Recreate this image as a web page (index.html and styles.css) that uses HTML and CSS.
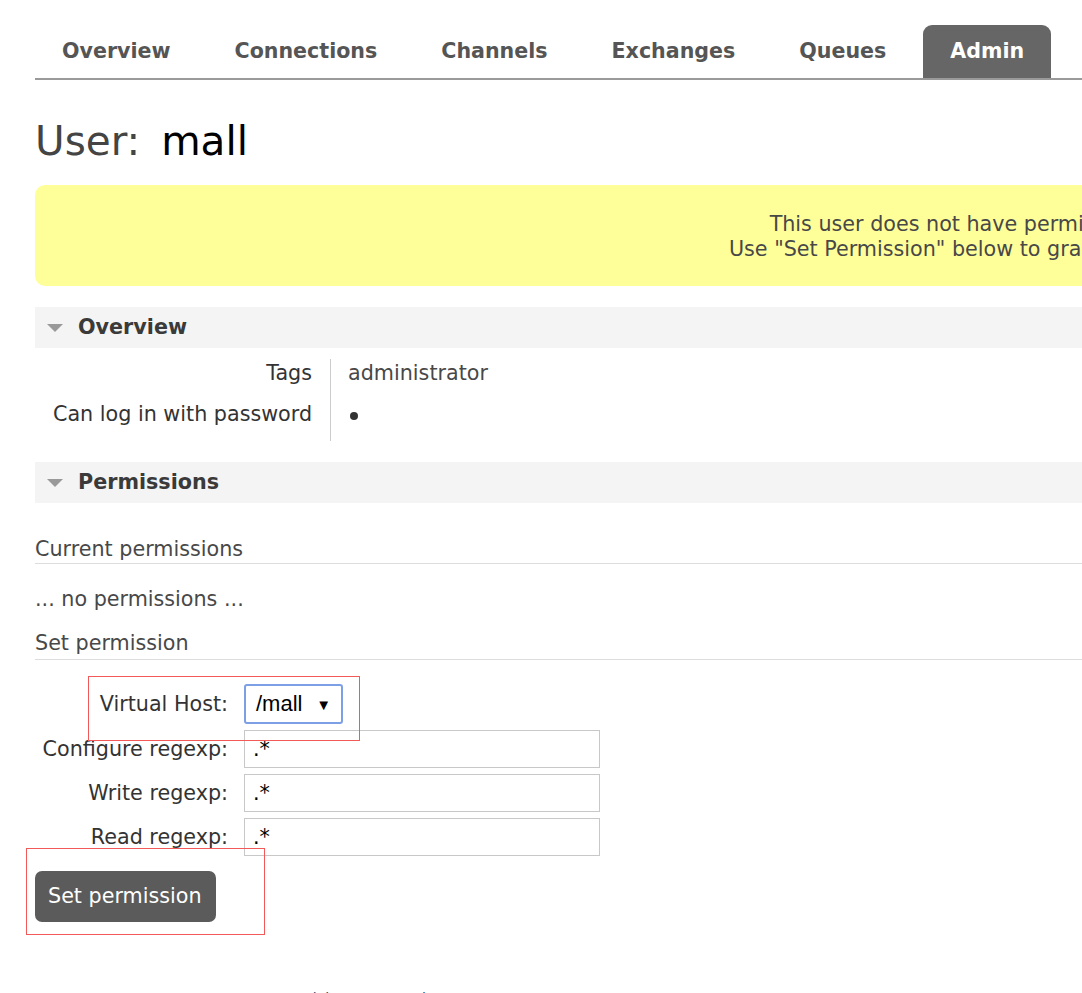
FILE: index.html
```html
<!DOCTYPE html>
<html>
<head>
<meta charset="utf-8">
<link rel="stylesheet" href="styles.css">
</head>
<body>
<div class="page">
  <ul class="tabs">
    <li class="tab">Overview</li>
    <li class="tab">Connections</li>
    <li class="tab">Channels</li>
    <li class="tab">Exchanges</li>
    <li class="tab">Queues</li>
    <li class="tab active">Admin</li>
  </ul>

  <h1 class="title">User: <b class="name">mall</b></h1>

  <div class="warning">
    <p>This user does not have permission to access any virtual hosts.<br>Use "Set Permission" below to grant permission to access virtual hosts.</p>
  </div>

  <section class="section">
    <h2 class="section-head"><span class="arrow"></span>Overview</h2>
    <table class="facts">
      <tr><th>Tags</th><td>administrator</td></tr>
      <tr><th>Can log in with password</th><td><span class="dot"></span></td></tr>
    </table>
  </section>

  <section class="section">
    <h2 class="section-head"><span class="arrow"></span>Permissions</h2>
    <h3 class="sub">Current permissions</h3>
    <p class="none">... no permissions ...</p>
    <h3 class="sub sub-set">Set permission</h3>
    <form class="form">
      <div class="row">
        <label class="lbl">Virtual Host:</label>
        <div class="select"><span>/mall</span><span class="caret">&#9660;</span></div>
      </div>
      <div class="row">
        <label class="lbl">Configure regexp:</label>
        <div class="input">.*</div>
      </div>
      <div class="row">
        <label class="lbl">Write regexp:</label>
        <div class="input">.*</div>
      </div>
      <div class="row">
        <label class="lbl">Read regexp:</label>
        <div class="input">.*</div>
      </div>
      <div class="btn">Set permission</div>
    </form>
  </section>

  <div class="footer">HTTP API &nbsp;&nbsp;&nbsp;&nbsp;&nbsp;&nbsp;&nbsp;&nbsp;&nbsp;&nbsp; Server Docs &nbsp;&nbsp;&nbsp;&nbsp;&nbsp; Tutorials &nbsp;&nbsp;&nbsp; Community Support</div>

  <div class="mark mark-host"></div>
  <div class="mark mark-btn"></div>
</div>
</body>
</html>
```

FILE: styles.css
```css
html, body {
  margin: 0;
  padding: 0;
  background: #fff;
  overflow: hidden;
}
body {
  font-family: "DejaVu Sans", Verdana, sans-serif;
  font-size: 20.7px;
  color: #484848;
}
.page {
  position: relative;
  width: 2126px;
  padding-left: 35px;
  height: 1100px;
}
.tabs {
  list-style: none;
  margin: 0;
  padding: 25px 0 0 0;
  display: flex;
  border-bottom: 2px solid #9a9a9a;
}
.tab {
  height: 53px;
  line-height: 53px;
  padding: 0 27px;
  margin-right: 10px;
  font-weight: bold;
  color: #555;
  font-size: 20.6px;
  border-radius: 9px 9px 0 0;
}
.tab.active {
  background: #666;
  color: #fff;
}
.title {
  margin: 37px 0 0 0;
  font-size: 40.5px;
  font-weight: normal;
  line-height: 49px;
  color: #444;
}
.title .name {
  font-weight: normal;
  color: #000;
  margin-left: 8px;
}
.warning {
  margin-top: 19px;
  background: #ffff99;
  border-radius: 10px;
  padding: 27px 0 24px;
  text-align: center;
  color: #484848;
}
.warning p {
  margin: 0;
  line-height: 25px;
}
.section-head {
  margin: 21px 0 0 0;
  height: 41px;
  line-height: 41px;
  background: #f4f4f4;
  font-size: 20.7px;
  font-weight: bold;
  color: #3a3a3a;
  display: flex;
  align-items: center;
}
.arrow {
  display: inline-block;
  width: 0;
  height: 0;
  border-left: 8px solid transparent;
  border-right: 8px solid transparent;
  border-top: 8px solid #999;
  margin: 0 15px 0 12px;
}
.facts {
  border-collapse: collapse;
  margin: 11px 0 1px 0;
}
.facts th,
.facts td {
  box-sizing: border-box;
  height: 41px;
  vertical-align: top;
  padding-top: 1px;
  line-height: 27px;
}
.facts th {
  font-weight: normal;
  text-align: right;
  padding-left: 18px;
  padding-right: 18px;
  color: #333;
  border-right: 1px solid #ccc;
}
.facts td {
  padding-left: 17px;
  padding-right: 18px;
}
.dot {
  display: inline-block;
  width: 8px;
  height: 8px;
  border-radius: 50%;
  background: #333;
  margin: 11px 0 0 2px;
  vertical-align: top;
}
.sub {
  margin: 0;
  font-size: 20.7px;
  font-weight: normal;
  color: #484848;
  border-bottom: 1px solid #ddd;
  padding-top: 33px;
  line-height: 27px;
  padding-bottom: 0;
}
.none {
  margin: 22px 0 0 0;
  line-height: 27px;
}
.sub-set {
  padding-top: 17px;
  padding-bottom: 2px;
}
.form {
  margin-top: 24px;
}
.row {
  display: flex;
  align-items: center;
  margin-bottom: 6px;
}
.lbl {
  width: 193px;
  text-align: right;
  color: #333;
  margin-right: 16px;
}
.select {
  box-sizing: border-box;
  width: 99px;
  height: 40px;
  border: 2px solid #7c9fe6;
  border-radius: 3px;
  display: flex;
  align-items: center;
  justify-content: space-between;
  padding: 0 10px 0 10px;
  font-family: "Liberation Sans", Arial, sans-serif;
  font-size: 22px;
  color: #000;
}
.caret {
  font-size: 15px;
}
.input {
  box-sizing: border-box;
  width: 356px;
  height: 38px;
  border: 1px solid #c8c8c8;
  padding: 0 8px;
  line-height: 36px;
  color: #000;
  font-size: 20.7px;
}
.btn {
  display: inline-block;
  margin-top: 9px;
  background: #5b5b5b;
  color: #fff;
  border-radius: 7px;
  height: 51px;
  line-height: 51px;
  padding: 0 14px 0 13px;
  font-size: 20.7px;
}
.footer {
  position: absolute;
  left: 46px;
  top: 990px;
  font-size: 14px;
  color: #2c4a6b;
  white-space: pre;
}
.mark {
  position: absolute;
  border: 1.5px solid #f25a5a;
}
.mark-host {
  left: 88px;
  top: 676px;
  width: 270px;
  height: 63px;
}
.mark-btn {
  left: 26px;
  top: 848px;
  width: 237px;
  height: 85px;
}
```
